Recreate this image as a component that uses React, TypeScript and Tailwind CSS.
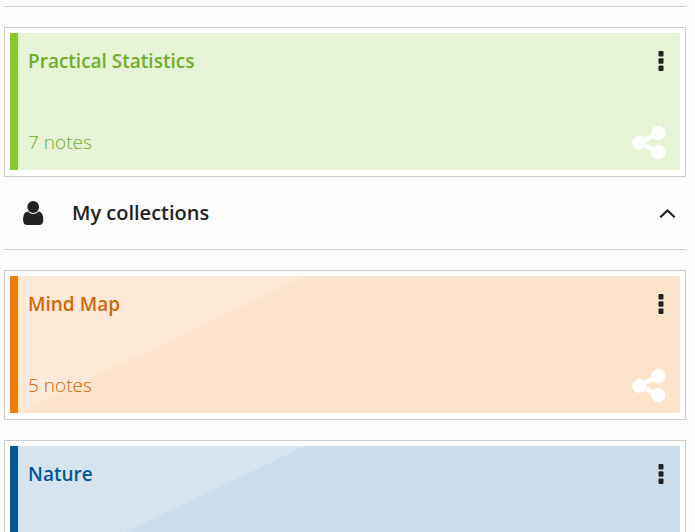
import { useState } from "react";

type Collection = {
  name: string;
  notes?: number;
  shared: boolean;
  shine: boolean;
  bar: string;
  panel: string;
  glare: string;
  text: string;
};

const sharedCollections: Collection[] = [
  {
    name: "Practical Statistics",
    notes: 7,
    shared: true,
    shine: false,
    bar: "border-[#84cc2d]",
    panel: "bg-[#e6f3d6]",
    glare: "",
    text: "text-[#6fae2a]",
  },
];

const myCollections: Collection[] = [
  {
    name: "Mind Map",
    notes: 5,
    shared: true,
    shine: true,
    bar: "border-[#f57c00]",
    panel: "bg-[#fce4cc]",
    glare: "bg-[#fde9d7]",
    text: "text-[#d06806]",
  },
  {
    name: "Nature",
    shared: false,
    shine: true,
    bar: "border-[#02579b]",
    panel: "bg-[#ccdeeb]",
    glare: "bg-[#d7e4ee]",
    text: "text-[#02579b]",
  },
];

export default function App() {
  const [open, setOpen] = useState(true);

  return (
    <main className="h-screen overflow-x-hidden overflow-y-auto bg-[#fdfdfd] pt-[6px] pr-[9px] pl-1 font-['Open_Sans',sans-serif] [scrollbar-width:none]">
      <section className="flex flex-col gap-5 border-t border-[#cccccc] pt-5">
        {sharedCollections.map((collection) => (
          <CollectionCard key={collection.name} collection={collection} />
        ))}
      </section>

      <section>
        <h2 className="border-b border-[#cccccc]">
          <button
            type="button"
            aria-expanded={open}
            onClick={() => setOpen(!open)}
            className="flex h-[72px] w-full items-center pr-[10px] pl-[19px] text-left text-[20px] font-semibold text-[#222222]"
          >
            <UserIcon />
            <span className="ml-7 flex-1">My collections</span>
            <ChevronIcon open={open} />
          </button>
        </h2>
        {open ? (
          <div className="flex flex-col gap-5 pt-5">
            {myCollections.map((collection) => (
              <CollectionCard key={collection.name} collection={collection} />
            ))}
          </div>
        ) : null}
      </section>
    </main>
  );
}

function CollectionCard({ collection }: { collection: Collection }) {
  const { name, notes, shared, shine, bar, panel, glare, text } = collection;

  return (
    <article className="border border-[#cccccc] bg-white px-[5px] pt-[5px] pb-[6px]">
      <div
        className={`relative flex h-[137px] justify-between border-l-8 pr-[14px] pl-[10px] ${bar} ${panel}`}
      >
        {shine ? (
          <div
            className={`absolute inset-y-0 left-0 w-[287px] [clip-path:polygon(0_0,100%_0,0_100%)] ${glare}`}
          />
        ) : null}
        <div className={`relative flex flex-col justify-between py-[14px] ${text}`}>
          <h3 className="text-[19px] leading-7 font-semibold">{name}</h3>
          {notes !== undefined ? (
            <p className="text-[19px] leading-7 font-light">{notes} notes</p>
          ) : null}
        </div>
        <div className="flex flex-col items-end justify-between pt-[18px] pb-[10px]">
          <button
            type="button"
            aria-label={`Options for ${name}`}
            className="flex w-[10px] justify-center text-[#222222]"
          >
            <DotsIcon />
          </button>
          {shared ? <ShareIcon /> : null}
        </div>
      </div>
    </article>
  );
}

function DotsIcon() {
  return (
    <svg width="6" height="20" viewBox="0 0 6 20" fill="currentColor" aria-hidden="true">
      <rect x="0.5" y="0" width="5" height="5.6" rx="1" />
      <rect x="0.5" y="7.2" width="5" height="5.6" rx="1" />
      <rect x="0.5" y="14.4" width="5" height="5.6" rx="1" />
    </svg>
  );
}

function ShareIcon() {
  return (
    <svg width="34" height="34" viewBox="0 0 34 34" className="text-white" aria-hidden="true">
      <path d="M26.5 7 7.5 16.7l19 9.8" fill="none" stroke="currentColor" strokeWidth="4.6" />
      <g fill="currentColor">
        <circle cx="7.2" cy="16.7" r="7" />
        <circle cx="26.3" cy="7.1" r="7.1" />
        <circle cx="26.3" cy="26.2" r="7.1" />
      </g>
    </svg>
  );
}

function UserIcon() {
  return (
    <svg width="21" height="24" viewBox="0 0 21 24" fill="currentColor" aria-hidden="true">
      <circle cx="10.2" cy="6" r="5.9" />
      <path d="M4.9 10.4C6.3 12 8.1 12.9 10.2 12.9s3.9-.9 5.3-2.5c3.4.3 4.8 3.8 4.8 8.600 0 3-1.500 5-4 5H4.100c-2.500 0-4-2-4-5 0-4.800 1.400-8.300 4.800-8.600Z" />
    </svg>
  );
}

function ChevronIcon({ open }: { open: boolean }) {
  return (
    <svg
      width="17"
      height="10"
      viewBox="0 0 17 10"
      className={open ? "" : "rotate-180"}
      aria-hidden="true"
    >
      <path d="M1.3 9.2 8.5 2.5l7.2 6.7" fill="none" stroke="currentColor" strokeWidth="2.2" />
    </svg>
  );
}
